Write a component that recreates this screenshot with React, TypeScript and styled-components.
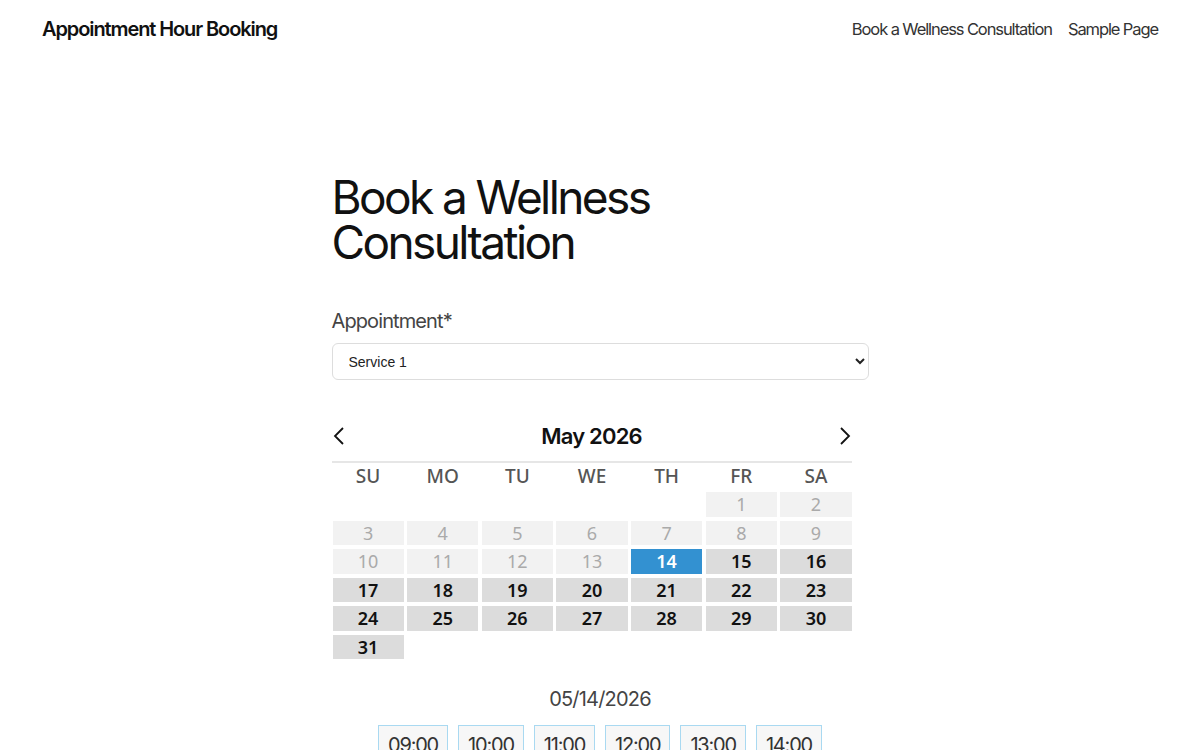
import React from "react";
import styled, { createGlobalStyle } from "styled-components";

const Global = createGlobalStyle`
  html, body { margin: 0; padding: 0; background: #fff; }
  body { font-family: Inter, "Noto Sans", sans-serif; color: #111; }
`;

const Header = styled.header`
  display: flex;
  align-items: center;
  justify-content: space-between;
  height: 58px;
  padding: 0 42px;
`;

const SiteTitle = styled.div`
  font-size: 20px;
  font-weight: 600;
  letter-spacing: -1.1px;
  color: #111;
`;

const Nav = styled.nav`
  display: flex;
  gap: 16px;
`;

const NavLink = styled.a`
  font-size: 16.5px;
  color: #333;
  letter-spacing: -1.1px;
  text-decoration: none;
`;

const Main = styled.main`
  width: 537px;
  margin: 0 auto;
  padding-top: 117px;
`;

const Title = styled.h1`
  margin: 0;
  font-size: 46px;
  font-weight: 400;
  line-height: 45px;
  letter-spacing: -2.6px;
  color: #111;
`;

const Label = styled.div`
  margin-top: 44px;
  font-size: 20px;
  color: #444;
  letter-spacing: -0.9px;
`;

const Select = styled.select`
  display: block;
  width: 100%;
  height: 37px;
  margin-top: 10px;
  padding: 0 12px;
  border: 1px solid #ddd;
  border-radius: 6px;
  background: #fff;
  font-family: "Liberation Sans", Arial, sans-serif;
  font-size: 14px;
  color: #222;
`;

const Calendar = styled.div`
  width: 520px;
  margin-top: 38px;
`;

const CalHead = styled.div`
  display: flex;
  align-items: center;
  justify-content: space-between;
  height: 36px;
  border-bottom: 2px solid #e6e6e6;
  padding-bottom: 7px;
`;

const Month = styled.div`
  font-size: 22px;
  font-weight: 600;
  color: #111;
  letter-spacing: -0.8px;
`;

const Arrow = styled.button`
  width: 14px;
  height: 24px;
  padding: 0;
  border: 0;
  background: none;
  display: flex;
  align-items: center;
  justify-content: center;
`;

const Grid = styled.div`
  display: grid;
  grid-template-columns: repeat(7, 1fr);
  column-gap: 3.5px;
  row-gap: 4px;
  margin-top: 1px;
  padding-left: 1px;
`;

const Weekday = styled.div`
  height: 24px;
  display: flex;
  align-items: center;
  justify-content: center;
  font-family: "Noto Sans", sans-serif;
  font-size: 19px;
  font-weight: 500;
  color: #555;
`;

type DayState = "empty" | "disabled" | "open" | "selected";

const Day = styled.div<{ $state: DayState }>`
  height: 24.5px;
  display: flex;
  align-items: center;
  justify-content: center;
  font-family: "Noto Sans", sans-serif;
  font-size: 18px;
  font-weight: ${(p) => (p.$state === "disabled" ? 400 : 600)};
  background: ${(p) =>
    p.$state === "empty"
      ? "transparent"
      : p.$state === "disabled"
      ? "#f2f2f2"
      : p.$state === "selected"
      ? "#3391d1"
      : "#dcdcdc"};
  color: ${(p) =>
    p.$state === "disabled" ? "#aaa" : p.$state === "selected" ? "#fff" : "#111"};
`;

const DateLabel = styled.div`
  margin-top: 28px;
  text-align: center;
  font-size: 20px;
  color: #444;
  letter-spacing: -0.8px;
`;

const Slots = styled.div`
  display: flex;
  justify-content: center;
  gap: 10px;
  margin-top: 14px;
`;

const Slot = styled.button`
  height: 40px;
  padding: 0 9px;
  border: 1px solid #a9d9f1;
  background: #f7f7f7;
  font-family: Inter, "Noto Sans", sans-serif;
  font-size: 20px;
  color: #333;
  letter-spacing: -1.2px;
`;

const Chevron = ({ dir }: { dir: "left" | "right" }) => (
  <svg width="14" height="22" viewBox="0 0 14 22">
    <path
      d={dir === "left" ? "M11 3 L3 11 L11 19" : "M3 3 L11 11 L3 19"}
      fill="none"
      stroke="#111"
      strokeWidth="1.8"
    />
  </svg>
);

const days: { n: number | null; s: DayState }[] = [];
for (let i = 0; i < 5; i++) days.push({ n: null, s: "empty" });
for (let d = 1; d <= 31; d++) {
  days.push({ n: d, s: d < 14 ? "disabled" : d === 14 ? "selected" : "open" });
}

const weekdays = ["SU", "MO", "TU", "WE", "TH", "FR", "SA"];
const times = ["09:00", "10:00", "11:00", "12:00", "13:00", "14:00"];

export default function App() {
  return (
    <>
      <Global />
      <Header>
        <SiteTitle>Appointment Hour Booking</SiteTitle>
        <Nav>
          <NavLink href="#">Book a Wellness Consultation</NavLink>
          <NavLink href="#">Sample Page</NavLink>
        </Nav>
      </Header>
      <Main>
        <Title>Book a Wellness Consultation</Title>
        <Label>Appointment*</Label>
        <Select defaultValue="Service 1">
          <option>Service 1</option>
        </Select>
        <Calendar>
          <CalHead>
            <Arrow>
              <Chevron dir="left" />
            </Arrow>
            <Month>May 2026</Month>
            <Arrow>
              <Chevron dir="right" />
            </Arrow>
          </CalHead>
          <Grid>
            {weekdays.map((w) => (
              <Weekday key={w}>{w}</Weekday>
            ))}
            {days.map((d, i) => (
              <Day key={i} $state={d.s}>
                {d.n}
              </Day>
            ))}
          </Grid>
        </Calendar>
        <DateLabel>05/14/2026</DateLabel>
        <Slots>
          {times.map((t) => (
            <Slot key={t}>{t}</Slot>
          ))}
        </Slots>
      </Main>
    </>
  );
}
